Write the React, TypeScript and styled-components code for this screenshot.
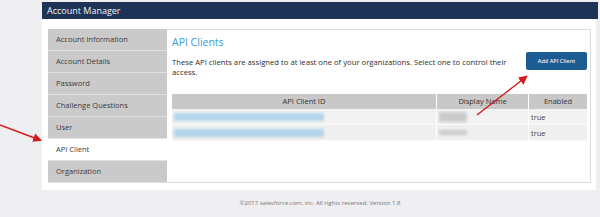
import styled, { createGlobalStyle } from "styled-components";

const GlobalStyle = createGlobalStyle`
  html, body {
    margin: 0;
    padding: 0;
    background: #efeef0;
    font-family: "Open Sans", "Noto Sans", sans-serif;
  }
`;

const Page = styled.div`
  position: relative;
  width: 600px;
  height: 217px;
  overflow: hidden;
  background: #efeef0;
  padding: 2px 2px 0 42px;
  box-sizing: border-box;
`;

const Header = styled.div`
  height: 17px;
  background: #1f3357;
  color: #f2f4f8;
  font-size: 9px;
  line-height: 17px;
  padding-left: 5px;
`;

const Panel = styled.div`
  background: #fff;
  display: flex;
  padding: 10px 5px 7px 6px;
  margin-right: 2px;
`;

const Sidebar = styled.div`
  width: 119px;
  flex-shrink: 0;
  display: flex;
  flex-direction: column;
`;

const NavItem = styled.div<{ $active?: boolean }>`
  height: 21px;
  line-height: 21px;
  padding-left: 8px;
  font-size: 7.5px;
  color: #3a3a3a;
  background: ${(p) => (p.$active ? "#ffffff" : "#cbcacb")};
  border-bottom: 1px solid #e2e2e2;
`;

const Content = styled.div`
  flex: 1;
  min-width: 0;
  border: 1px solid #dcdcdc;
  border-left: none;
  padding: 4px 3px 0 5px;
`;

const Title = styled.div`
  font-size: 10.5px;
  color: #3c9ccf;
  line-height: 16px;
`;

const IntroRow = styled.div`
  display: flex;
  align-items: flex-start;
  justify-content: space-between;
  margin-top: 5px;
`;

const Intro = styled.div`
  font-size: 7.7px;
  line-height: 10px;
  color: #2e2e2e;
  width: 345px;
  padding-top: 2px;
`;

const AddButton = styled.div`
  width: 61px;
  height: 18px;
  margin-top: -3px;
  background: #1b5d92;
  border-radius: 2px;
  color: #e8eef5;
  font-size: 5.5px;
  font-weight: 600;
  display: flex;
  align-items: center;
  justify-content: center;
`;

const Table = styled.div`
  margin-top: 17px;
  display: grid;
  grid-template-columns: 264px 91px 58px;
  column-gap: 1px;
  width: 415px;
`;

const HeadCell = styled.div`
  height: 15px;
  line-height: 15px;
  background: #c8c8c8;
  font-size: 7.5px;
  color: #333;
  text-align: center;
  position: relative;
`;

const SortMark = styled.span`
  position: absolute;
  right: 6px;
  color: #7a9cb8;
  font-size: 6px;
`;

const Cell = styled.div<{ $alt?: boolean }>`
  height: 15px;
  border-bottom: 1px solid #fafafa;
  background: ${(p) => (p.$alt ? "#efefef" : "#f2f2f2")};
  display: flex;
  align-items: center;
  padding-left: 2px;
  font-size: 7.5px;
  color: #444;
  overflow: hidden;
`;

const Blur = styled.div<{ $w: number; $color: string; $h?: number }>`
  width: ${(p) => p.$w}px;
  height: ${(p) => p.$h ?? 8}px;
  background: ${(p) => p.$color};
  filter: blur(1.4px);
  opacity: 0.85;
`;

const Footer = styled.div`
  text-align: center;
  font-size: 6px;
  color: #777;
  padding-top: 9px;
`;

const Arrows = styled.svg`
  position: absolute;
  left: 0;
  top: 0;
  pointer-events: none;
`;

const rows = [
  { id: 150, name: 28 },
  { id: 150, name: 28 },
];

export default function App() {
  return (
    <>
      <GlobalStyle />
      <Page>
        <Header>Account Manager</Header>
        <Panel>
          <Sidebar>
            <NavItem>Account Information</NavItem>
            <NavItem>Account Details</NavItem>
            <NavItem>Password</NavItem>
            <NavItem>Challenge Questions</NavItem>
            <NavItem>User</NavItem>
            <NavItem $active>API Client</NavItem>
            <NavItem>Organization</NavItem>
          </Sidebar>
          <Content>
            <Title>API Clients</Title>
            <IntroRow>
              <Intro>
                These API clients are assigned to at least one of your organizations. Select one
                to control their access.
              </Intro>
              <AddButton>Add API Client</AddButton>
            </IntroRow>
            <Table>
              <HeadCell>API Client ID</HeadCell>
              <HeadCell>
                Display Name<SortMark>-</SortMark>
              </HeadCell>
              <HeadCell>Enabled</HeadCell>
              {rows.map((r, i) => (
                <>
                  <Cell key={"a" + i} $alt={i % 2 === 1}>
                    <Blur $w={r.id} $color="#a9d0ea" />
                  </Cell>
                  <Cell key={"b" + i} $alt={i % 2 === 1}>
                    <Blur $w={r.name} $color="#c4c4c4" $h={i === 0 ? 10 : 5} />
                  </Cell>
                  <Cell key={"c" + i} $alt={i % 2 === 1}>
                    true
                  </Cell>
                </>
              ))}
            </Table>
          </Content>
        </Panel>
        <Footer>©2017 salesforce.com, inc. All rights reserved. Version 1.8</Footer>
        <Arrows width={600} height={217} viewBox="0 0 600 217">
          <defs>
            <marker id="head" markerWidth="6" markerHeight="6" refX="4.5" refY="3" orient="auto">
              <path d="M0,0 L6,3 L0,6 Z" fill="#d41c1c" />
            </marker>
          </defs>
          <line x1={0} y1={125} x2={40} y2={140} stroke="#d41c1c" strokeWidth={1.5} markerEnd="url(#head)" />
          <line x1={477} y1={115} x2={526} y2={77} stroke="#d41c1c" strokeWidth={1.5} markerEnd="url(#head)" />
        </Arrows>
      </Page>
    </>
  );
}
